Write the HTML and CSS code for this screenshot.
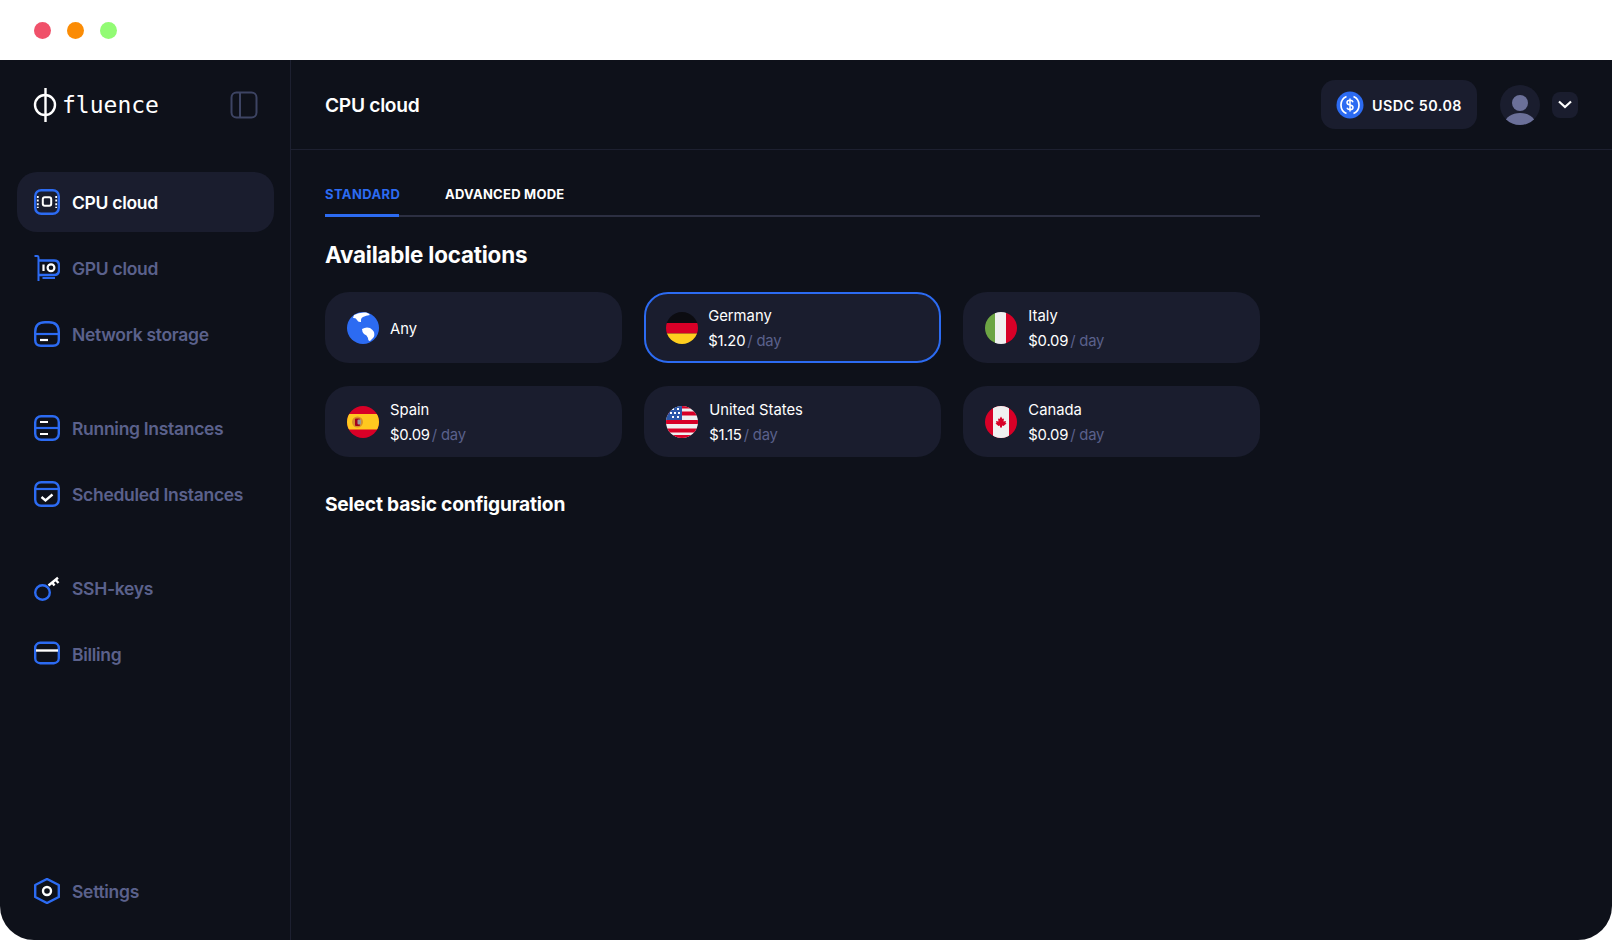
FILE: index.html
```html
<!DOCTYPE HTML>
<html>
<head>
<meta charset="utf-8" />
<title>Fluence - CPU cloud</title>
<link rel="stylesheet" href="styles.css">
</head>

<body>
<div class="titlebar">
	<span class="dot dot-red"></span>
	<span class="dot dot-orange"></span>
	<span class="dot dot-green"></span>
</div>
<div class="window">
	<aside class="sidebar">
		<div class="brand">
			<svg class="brand-mark" width="24" height="34" viewBox="0 0 24 34" fill="none" stroke="#fff" stroke-width="2.400"><circle cx="12" cy="17" r="10"/><path d="M12.500 0V34"/></svg>
			<span class="brand-name">fluence</span>
			<svg class="collapse" width="28" height="28" viewBox="0 0 28 28" fill="none" stroke="#3d4463" stroke-width="2"><rect x="1.500" y="1.500" width="25" height="25" rx="5"/><path d="M10 1.500V26.500"/></svg>
		</div>
		<nav class="nav">
			<a class="nav-item active">
				<svg class="icon" viewBox="0 0 26 26" fill="none"><rect x="1.200" y="1.200" width="23.600" height="23.600" rx="6" stroke="#2c6bf2" stroke-width="2.400"/><rect x="8.800" y="8.300" width="8.400" height="8.400" rx="2" stroke="#fff" stroke-width="2"/><path d="M3.800 7V19M22.200 7V19" stroke="#fff" stroke-width="1.800" stroke-dasharray="2 1.600"/></svg>
				CPU cloud
			</a>
			<a class="nav-item">
				<svg class="icon" viewBox="0 0 26 26" fill="none"><path d="M0.500 1H3.200Q4.500 1 4.500 3V26" stroke="#2c6bf2" stroke-width="2"/><path d="M4.500 5.500H20Q25 5.500 25 10.500V15Q25 20 20 20H4.500" stroke="#2c6bf2" stroke-width="2.400"/><path d="M8.500 23H21" stroke="#2c6bf2" stroke-width="2"/><path d="M9.500 9.500V16" stroke="#fff" stroke-width="2.200"/><circle cx="17" cy="12.800" r="3.400" stroke="#fff" stroke-width="2.200"/></svg>
				GPU cloud
			</a>
			<a class="nav-item">
				<svg class="icon" viewBox="0 0 26 26" fill="none"><path d="M1.200 19V11Q1.200 1.200 11 1.200H15Q24.800 1.200 24.800 11V19Q24.800 24.800 19 24.800H7Q1.200 24.800 1.200 19Z" stroke="#2c6bf2" stroke-width="2.400"/><path d="M1 13H25" stroke="#2c6bf2" stroke-width="2.200"/><path d="M6 19H14" stroke="#fff" stroke-width="2.200"/></svg>
				Network storage
			</a>
			<a class="nav-item group-start">
				<svg class="icon" viewBox="0 0 26 26" fill="none"><rect x="1.200" y="1.200" width="23.600" height="23.600" rx="6" stroke="#2c6bf2" stroke-width="2.400"/><path d="M1 13H25" stroke="#2c6bf2" stroke-width="2.200"/><path d="M6 7H14M6 19H14" stroke="#fff" stroke-width="2.200"/></svg>
				Running Instances
			</a>
			<a class="nav-item">
				<svg class="icon" viewBox="0 0 26 26" fill="none"><rect x="1.200" y="1.200" width="23.600" height="23.600" rx="6" stroke="#2c6bf2" stroke-width="2.400"/><path d="M1 8H25" stroke="#2c6bf2" stroke-width="2.200"/><path d="M7.500 16L11.500 19.500L18.500 13.500" stroke="#fff" stroke-width="2.400"/></svg>
				Scheduled Instances
			</a>
			<a class="nav-item group-start">
				<svg class="icon" viewBox="0 0 26 26" fill="none"><circle cx="8.500" cy="17.500" r="7.300" stroke="#2c6bf2" stroke-width="2.400"/><path d="M14.500 10.500L24 2.800M18.200 7.500L20.500 10.500M21.500 4.800L24.500 8" stroke="#fff" stroke-width="2.400"/></svg>
				SSH-keys
			</a>
			<a class="nav-item">
				<svg class="icon" viewBox="0 0 26 26" fill="none"><rect x="1.200" y="1.800" width="23.600" height="20.400" rx="5" stroke="#2c6bf2" stroke-width="2.400"/><path d="M2 9.500H24" stroke="#fff" stroke-width="2.400"/></svg>
				Billing
			</a>
			<a class="nav-item settings">
				<svg class="icon" viewBox="0 0 26 26" fill="none"><path d="M13 1L24.800 7V19L13 25L1.200 19V7Z" stroke="#2c6bf2" stroke-width="2.400" stroke-linejoin="round"/><circle cx="13" cy="13" r="4" stroke="#fff" stroke-width="2.400"/></svg>
				Settings
			</a>
		</nav>
	</aside>
	<div class="main">
		<header class="header">
			<h1>CPU cloud</h1>
			<div class="balance">
				<svg width="28" height="28" viewBox="0 0 28 28" fill="none"><circle cx="14" cy="14" r="13.500" fill="#2c6bf2"/><path d="M10.500 5.500A9.300 9.300 0 0 0 10.500 22.500M17.500 5.500A9.300 9.300 0 0 1 17.500 22.500" stroke="#fff" stroke-width="1.700"/><path d="M17 11.200Q16.500 9.300 14 9.300Q11 9.300 11 11.500Q11 13.500 14 14Q17 14.500 17 16.500Q17 18.700 14 18.700Q11.500 18.700 11 16.800M14 7.500V20.500" stroke="#fff" stroke-width="1.500"/></svg>
				<span>USDC 50.08</span>
			</div>
			<svg class="avatar" width="40" height="40" viewBox="0 0 40 40"><defs><clipPath id="av"><circle cx="20" cy="20" r="20"/></clipPath></defs><circle cx="20" cy="20" r="20" fill="#1a1d2e"/><circle cx="20" cy="18" r="8" fill="#6b7099"/><ellipse cx="20" cy="38" rx="15" ry="10" fill="#6b7099" clip-path="url(#av)"/></svg>
			<div class="chevron"><svg width="14" height="9" viewBox="0 0 14 9" fill="none" stroke="#fff" stroke-width="2.200"><path d="M1 1.500L7 7L13 1.500"/></svg></div>
		</header>
		<section class="content">
			<div class="tabs">
				<a class="tab current">STANDARD</a>
				<a class="tab">ADVANCED MODE</a>
			</div>
			<h2 class="title-big">Available locations</h2>
			<div class="locations">
				<div class="card">
					<svg class="flag" viewBox="0 0 32 32"><circle cx="16" cy="16" r="16" fill="#2c6bf2"/><path d="M7 3Q12 0 19 0.500Q22 1 23 3Q19 3.500 16 5Q13.500 6 14 10Q11 10.500 10 8Q9 5.500 6 6Z" fill="#fff"/><path d="M15 17Q19 14.500 23 16Q26 18 27 20Q28 24 26 26Q24 28 23 29Q21 29 21 26Q20 23 17 22Q15 20 15 17Z" fill="#fff"/></svg>
					<div class="place"><div>Any</div></div>
				</div>
				<div class="card selected">
					<svg class="flag" viewBox="0 0 32 32"><defs><clipPath id="f1"><circle cx="16" cy="16" r="16"/></clipPath></defs><g clip-path="url(#f1)"><rect width="32" height="11" fill="#0c0c11"/><rect y="11" width="32" height="10.500" fill="#d80027"/><rect y="21.500" width="32" height="10.500" fill="#ffce1f"/></g></svg>
					<div class="place"><div>Germany</div><div class="price">$1.20<span>/ day</span></div></div>
				</div>
				<div class="card">
					<svg class="flag" viewBox="0 0 32 32"><defs><clipPath id="f2"><circle cx="16" cy="16" r="16"/></clipPath></defs><g clip-path="url(#f2)"><rect width="11" height="32" fill="#6da544"/><rect x="10" width="12" height="32" fill="#f0f0f0"/><rect x="21" width="11" height="32" fill="#d80027"/></g></svg>
					<div class="place"><div>Italy</div><div class="price">$0.09<span>/ day</span></div></div>
				</div>
				<div class="card">
					<svg class="flag" viewBox="0 0 32 32"><defs><clipPath id="f3"><circle cx="16" cy="16" r="16"/></clipPath></defs><g clip-path="url(#f3)"><rect width="32" height="32" fill="#d80027"/><rect y="8" width="32" height="15.500" fill="#ffc81f"/><circle cx="10.500" cy="16" r="5.500" fill="#d8902a"/><rect x="8" y="12.500" width="5" height="7.500" rx="1" fill="#a2001d"/><rect x="10.500" y="13.500" width="3.500" height="5" rx="1" fill="#9a9a9a"/></g></svg>
					<div class="place"><div>Spain</div><div class="price">$0.09<span>/ day</span></div></div>
				</div>
				<div class="card">
					<svg class="flag" viewBox="0 0 32 32"><defs><clipPath id="f4"><circle cx="16" cy="16" r="16"/></clipPath></defs><g clip-path="url(#f4)"><rect width="32" height="32" fill="#f0f0f0"/><path d="M0 5.500H32V9.500H0ZM0 14H32V18H0ZM0 22.500H32V26.500H0ZM0 29H32V32H0ZM16 0H32V2.500H16Z" fill="#d80027"/><rect width="16" height="14" fill="#2c57a8"/><path d="M6 3H8M11 3H13M4 7H6M8 7H10M12 7H14M6 11H8M11 11H13" stroke="#fff" stroke-width="2"/></g></svg>
					<div class="place"><div>United States</div><div class="price">$1.15<span>/ day</span></div></div>
				</div>
				<div class="card">
					<svg class="flag" viewBox="0 0 32 32"><defs><clipPath id="f5"><circle cx="16" cy="16" r="16"/></clipPath></defs><g clip-path="url(#f5)"><rect width="32" height="32" fill="#d80027"/><rect x="8" width="16" height="32" fill="#f0f0f0"/><path d="M16 10.500L17.500 13L19 12.500L18.500 15.500L21 15L20.500 17L21.500 17.500L18.500 20L17 19.500V21.500H15V19.500L13.500 20L10.500 17.500L11.500 17L11 15L13.500 15.500L13 12.500L14.500 13Z" fill="#d80027"/></g></svg>
					<div class="place"><div>Canada</div><div class="price">$0.09<span>/ day</span></div></div>
				</div>
			</div>
			<h2 class="title-small">Select basic configuration</h2>
		</section>
	</div>
</div>
</body>
</html>
```

FILE: styles.css
```css
* { box-sizing: border-box; }
html, body { height: 100%; }
body {
	margin: 0;
	background: #fff;
	color: #fff;
	font-family: "Inter", "Noto Sans", sans-serif;
	overflow: hidden;
}

.titlebar { display: flex; align-items: center; gap: 16px; height: 60px; padding-left: 34px; }
	.dot { width: 17px; height: 17px; border-radius: 50%; }
	.dot-red { background: #f0516a; }
	.dot-orange { background: #fb8c05; }
	.dot-green { background: #92fb74; }

.window {
	display: flex;
	height: 880px;
	background: #0e111a;
	border-radius: 0 0 34px 34px;
	overflow: hidden;
}

.sidebar {
	display: flex;
	flex-direction: column;
	flex: 0 0 291px;
	padding: 0 16px 0 17px;
	border-right: 1px solid #1d2030;
}
	.brand { display: flex; align-items: center; height: 90px; padding-left: 16px; margin-bottom: 22px; }
		.brand-mark { flex: none; }
		.brand-name {
			margin-left: 5px;
			font-family: "DejaVu Sans Mono", "Liberation Mono", monospace;
			font-size: 23px;
			letter-spacing: 0;
		}
		.collapse { margin-left: auto; margin-right: 16px; }

.nav { display: flex; flex-direction: column; flex: 1; gap: 6px; padding-bottom: 19px; }
	.nav-item {
		display: flex;
		align-items: center;
		gap: 12px;
		height: 60px;
		padding-left: 17px;
		border-radius: 20px;
		color: #5b618c;
		font-size: 17.500px;
		font-weight: 600;
		letter-spacing: -0.3px;
	}
	.nav-item.active { background: #1a1d2e; color: #fff; }
	.nav-item.group-start { margin-top: 28px; }
	.nav-item.settings { margin-top: auto; }
	.icon { flex: none; width: 26px; height: 26px; }

.main { display: flex; flex-direction: column; flex: 1; }

.header {
	display: flex;
	align-items: center;
	height: 90px;
	padding: 0 34px 0 34px;
	border-bottom: 1px solid #1d2030;
}
	.header h1 { margin: 0 auto 0 0; font-size: 19.200px; font-weight: 600; letter-spacing: -0.3px; }
	.balance {
		display: flex;
		align-items: center;
		gap: 8px;
		height: 49px;
		padding: 0 15px;
		border-radius: 14px;
		background: #1a1d2e;
		font-size: 14.300px;
		font-weight: 600;
		letter-spacing: 0.5px;
	}
		.balance span { padding-top: 1px; }
	.avatar { margin-left: 23px; }
	.chevron {
		display: flex;
		align-items: center;
		justify-content: center;
		width: 26px;
		height: 26px;
		margin-left: 12px;
		border-radius: 8px;
		background: #1a1d2e;
	}

.content { width: 1003px; padding: 0 34px; }
	.tabs { display: flex; gap: 46px; height: 67px; padding-top: 34px; border-bottom: 2px solid #2c2f42; }
		.tab { height: 33px; font-size: 13px; font-weight: 700; line-height: 20px; letter-spacing: 0.25px; }
		.tab.current { width: 74px; color: #2c6bf2; border-bottom: 3px solid #2c6bf2; white-space: nowrap; letter-spacing: 0.4px; }
	.title-big { margin: 22px 0 21px; font-size: 22.400px; font-weight: 700; line-height: 32px; letter-spacing: -0.2px; }
	.title-small { margin: 33px 0 0; font-size: 19.200px; font-weight: 700; line-height: 28px; letter-spacing: -0.2px; }

.locations { display: grid; grid-template-columns: repeat(3, 1fr); gap: 23px 22.500px; }
	.card {
		display: flex;
		align-items: center;
		gap: 11px;
		height: 71px;
		padding: 0 0 0 22px;
		border-radius: 24px;
		background: #1a1d2e;
		font-size: 14.800px;
		line-height: 25px;
	}
	.card.selected { gap: 10px; border: 2px solid #2c6bf2; padding-left: 20px; }
	.place { padding-top: 3px; }
	.flag { flex: none; width: 32px; height: 32px; }
	.price { letter-spacing: -0.2px; }
	.price span { margin-left: 2px; color: #5b618c; }
```
